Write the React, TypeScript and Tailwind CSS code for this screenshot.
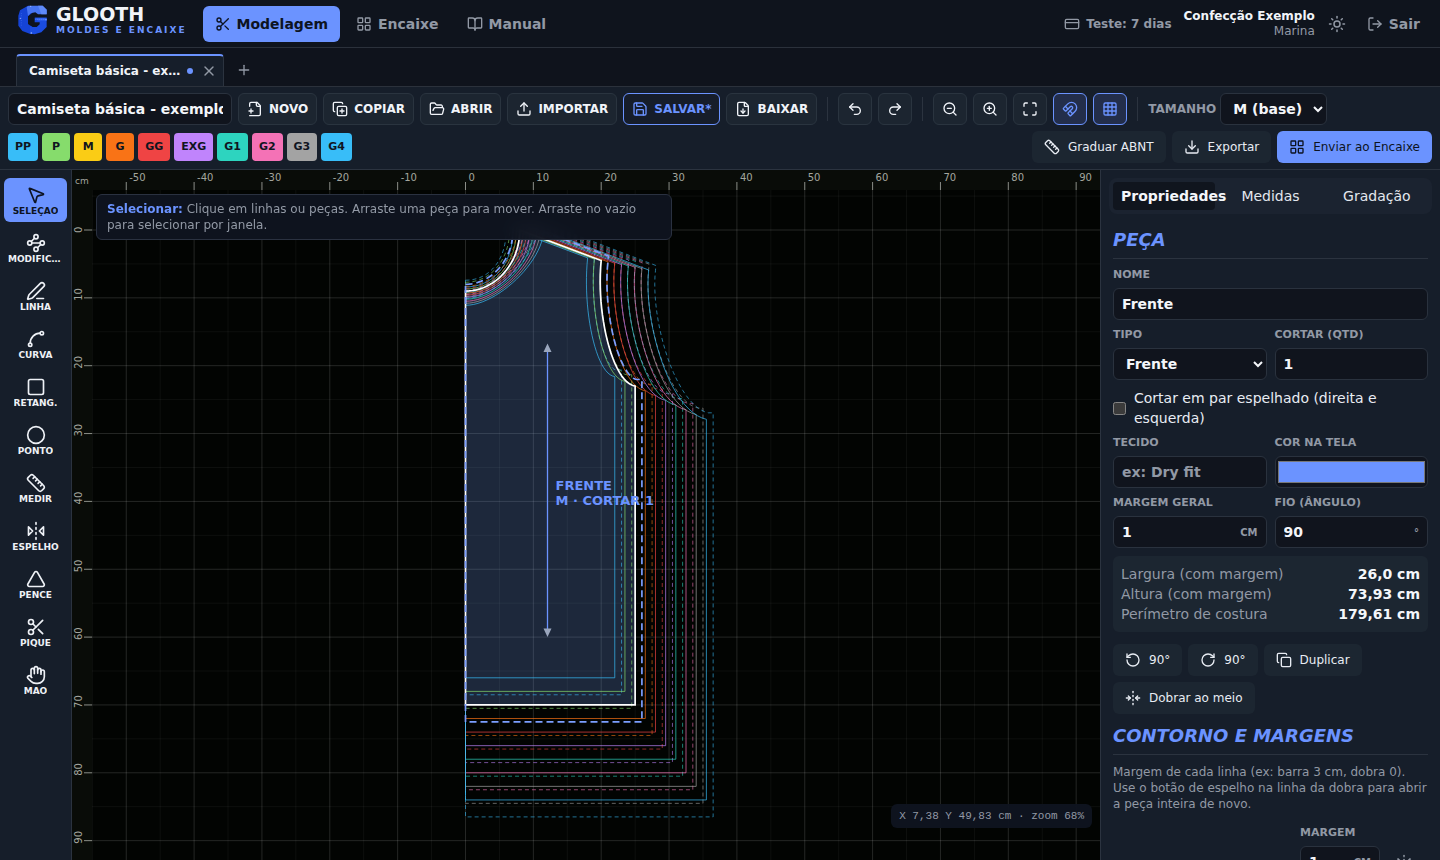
import React, { useState } from "react";
import type { ReactNode } from "react";
import {
  BookOpen,
  Circle,
  Copy,
  CopyPlus,
  CreditCard,
  Download,
  FileDown,
  FlipHorizontal2,
  FoldHorizontal,
  FolderOpen,
  Grid3x3,
  Hand,
  LayoutGrid,
  LogOut,
  Magnet,
  Maximize,
  MousePointer2,
  PenLine,
  Plus,
  Redo2,
  RotateCcw,
  RotateCw,
  Ruler,
  Save,
  Scissors,
  Spline,
  Square,
  Sun,
  Triangle,
  Undo2,
  Upload,
  Waypoints,
  X,
  ZoomIn,
  ZoomOut,
} from "lucide-react";

/* ---------- pattern geometry (centimetres) ---------- */

type Pt = [number, number];

const SCALE = 6.785;
const ORIGIN_X = 393.5;
const ORIGIN_Y = 60;

const toX = (cm: number) => ORIGIN_X + cm * SCALE;
const toY = (cm: number) => ORIGIN_Y + cm * SCALE;

function bezier(a: Pt, b: Pt, c: Pt, d: Pt): Pt[] {
  const out: Pt[] = [];
  for (let i = 0; i <= 24; i++) {
    const t = i / 24;
    const u = 1 - t;
    out.push([
      u * u * u * a[0] + 3 * u * u * t * b[0] + 3 * u * t * t * c[0] + t * t * t * d[0],
      u * u * u * a[1] + 3 * u * u * t * b[1] + 3 * u * t * t * c[1] + t * t * t * d[1],
    ]);
  }
  return out;
}

function offset(points: Pt[], distance: number): Pt[] {
  return points.map((p, i) => {
    const before = points[Math.max(0, i - 1)];
    const after = points[Math.min(points.length - 1, i + 1)];
    const dx = after[0] - before[0];
    const dy = after[1] - before[1];
    const len = Math.hypot(dx, dy);
    return [Math.max(0, p[0] + (dy / len) * distance), p[1] - (dx / len) * distance];
  });
}

function meet(a: Pt, b: Pt, c: Pt, d: Pt): Pt {
  const r: Pt = [b[0] - a[0], b[1] - a[1]];
  const s: Pt = [d[0] - c[0], d[1] - c[1]];
  const k = ((c[0] - a[0]) * s[1] - (c[1] - a[1]) * s[0]) / (r[0] * s[1] - r[1] * s[0]);
  return [a[0] + r[0] * k, a[1] + r[1] * k];
}

const pathOf = (points: Pt[]) =>
  "M" + points.map(([x, y]) => `${toX(x).toFixed(2)} ${toY(y).toFixed(2)}`).join("L") + "Z";

function piece(step: number) {
  const neck: Pt = [8 + 0.5 * step, 0];
  const neckDepth = 9 + 0.3 * step;
  const tip: Pt = [20 + step, 4.5 + 0.2 * step];
  const under: Pt = [25 + 1.5 * step, 23 + 0.7 * step];
  const hem = 70 + 2 * step;
  const bulge = 0.55 - 0.02 * step;
  const neckCurve = bezier(
    [0, neckDepth],
    [neck[0] * bulge, neckDepth],
    [neck[0], neckDepth * bulge],
    neck,
  );
  const armhole = bezier(
    tip,
    [tip[0] - 0.8, tip[1] + 7.5],
    [under[0] - 3.4 - 0.3 * step, under[1] - 0.5 - 0.1 * step],
    under,
  );
  const neckSeam = offset(neckCurve, 1);
  const shoulder = offset([neck, tip], 1);
  const armSeam = offset(armhole, 1);
  const last = armSeam.length - 1;
  const neckEnd = meet(neckSeam[23], neckSeam[24], shoulder[0], shoulder[1]);
  const armStart = meet(shoulder[0], shoulder[1], armSeam[0], armSeam[1]);
  return {
    cut: pathOf([...neckCurve, ...armhole, [under[0], hem], [0, hem]]),
    seam: pathOf([
      ...neckSeam,
      neckEnd,
      armStart,
      ...armSeam,
      [under[0] + 1, armSeam[last][1]],
      [under[0] + 1, hem + 2.5],
      [0, hem + 2.5],
    ]),
  };
}

const sizes = [
  { name: "PP", chip: "bg-[#38bdf8]", line: "#38bdf8", step: -2 },
  { name: "P", chip: "bg-[#86dc6c]", line: "#86dc6c", step: -1 },
  { name: "M", chip: "bg-[#facc15]", line: "#facc15", step: 0 },
  { name: "G", chip: "bg-[#f97316]", line: "#f97316", step: 1 },
  { name: "GG", chip: "bg-[#ef4444]", line: "#ef4444", step: 2 },
  { name: "EXG", chip: "bg-[#c084fc]", line: "#c084fc", step: 3 },
  { name: "G1", chip: "bg-[#2dd4bf]", line: "#2dd4bf", step: 4 },
  { name: "G2", chip: "bg-[#f472b6]", line: "#f472b6", step: 5 },
  { name: "G3", chip: "bg-[#a3a3a3]", line: "#a3a3a3", step: 6 },
  { name: "G4", chip: "bg-[#38bdf8]", line: "#38bdf8", step: 7 },
];

const range = (from: number, to: number, by: number) => {
  const out: number[] = [];
  for (let n = from; n <= to; n += by) out.push(n);
  return out;
};

function PatternCanvas() {
  const base = piece(0);
  return (
    <svg
      className="absolute inset-0 h-full w-full"
      fontFamily="'DejaVu Sans', sans-serif"
      role="img"
      aria-label="Molde da frente"
    >
      <rect width="100%" height="100%" fill="#020402" />
      {range(-55, 300, 5).map((n) => (
        <line
          key={`v${n}`}
          x1={toX(n)}
          x2={toX(n)}
          y1="0"
          y2="100%"
          stroke="#fff"
          strokeOpacity={n % 10 === 0 ? 0.14 : 0.05}
        />
      ))}
      {range(-5, 200, 5).map((n) => (
        <line
          key={`h${n}`}
          y1={toY(n)}
          y2={toY(n)}
          x1="0"
          x2="100%"
          stroke="#fff"
          strokeOpacity={n % 10 === 0 ? 0.14 : 0.05}
        />
      ))}

      <path d={base.cut} fill="#6c93e0" fillOpacity="0.26" />
      {sizes
        .filter((s) => s.step !== 0)
        .map((s) => {
          const p = piece(s.step);
          return (
            <g key={s.name} fill="none" stroke={s.line}>
              <path d={p.seam} strokeOpacity="0.6" strokeDasharray="4 3" />
              <path d={p.cut} strokeOpacity="0.7" />
            </g>
          );
        })}
      <path d={base.cut} fill="none" stroke="#fff" strokeWidth="1.700" />
      <path d={base.seam} fill="none" stroke="#7c9fff" strokeWidth="1.700" strokeDasharray="7 4" />

      <line x1="475.5" x2="475.5" y1="180" y2="460" stroke="#6b93ff" strokeWidth="1.3" />
      <path d="M475.5 173.500l4 8.500h-8zM475.500 467l4-8.500h-8z" fill="#9aa6bd" />
      <g fill="#6b93ff" fontSize="13" fontWeight="700">
        <text x="483.5" y="320">FRENTE</text>
        <text x="483.5" y="335">M · CORTAR 1</text>
      </g>

      <rect width="100%" height="20" fill="#090c08" />
      <rect width="20" height="100%" fill="#090c08" />
      <g fill="#a3a69f" fontSize="10">
        <text x="3" y="14" fontSize="9">cm</text>
        {range(-50, 300, 10).map((n) => (
          <g key={n}>
            <line x1={toX(n)} x2={toX(n)} y1="12" y2="20" stroke="#8b8e88" />
            <text x={toX(n) + 3} y="11">{n}</text>
          </g>
        ))}
        {range(0, 200, 10).map((n) => (
          <g key={n}>
            <line y1={toY(n)} y2={toY(n)} x1="12" x2="20" stroke="#8b8e88" />
            <text transform={`translate(10 ${toY(n) + 3}) rotate(-90)`}>{n}</text>
          </g>
        ))}
      </g>
    </svg>
  );
}

/* ---------- small building blocks ---------- */

function FileNew() {
  return (
    <svg
      className="size-4 shrink-0"
      viewBox="0 0 24 24"
      fill="none"
      stroke="currentColor"
      strokeWidth="2"
      strokeLinecap="round"
      strokeLinejoin="round"
      aria-hidden="true"
    >
      <path d="M4 22h14a2 2 0 0 0 2-2V7l-5-5H6a2 2 0 0 0-2 2v4" />
      <path d="M14 2v4a2 2 0 0 0 2 2h4" />
      <path d="M3 15h6" />
      <path d="M6 12v6" />
    </svg>
  );
}

function Logo() {
  return (
    <svg className="size-[30px]" viewBox="0 0 90 90" aria-hidden="true">
      <path d="M30 2 6 16 1 32v30l12 16 24 9 6-3V66l-13-9V34l12-10V6z" fill="#1543d6" />
      <path d="M32 2h42l12 12v14H60l-8-6-14 3-8 8-4-27z" fill="#4775f2" />
      <path d="M60 2h14l12 12v14H70z" fill="#5f8af9" />
      <path d="M50 38h36v28L70 82l-20 6-14-2V62l8 4h12l9-8v-6H50z" fill="#1a4ce0" />
      <path d="M50 38h36v9H60z" fill="#2c5eee" />
      <g fill="#9db8ff">
        <circle cx="7" cy="40" r="2" />
        <circle cx="38" cy="4" r="2" />
        <circle cx="40" cy="84" r="2.500" />
        <circle cx="84" cy="44" r="2" />
      </g>
      <path d="M52 43h28" stroke="#7fa2ff" strokeWidth="2" strokeDasharray="3 3" fill="none" />
      <path d="M10 24v38" stroke="#3f6df0" strokeWidth="2" strokeDasharray="3 4" fill="none" />
    </svg>
  );
}

const toolButton =
  "flex h-8 items-center gap-1.5 rounded-md border px-2 text-xs font-bold whitespace-nowrap";
const plainTool = "border-[#2a343f] bg-[#1c2530] text-[#f1f4f9]";
const iconTool = "flex h-8 w-[34px] items-center justify-center rounded-md border";
const field =
  "h-8 w-full min-w-0 rounded-md border border-[#2a323e] bg-[#10141d] px-2 text-sm font-bold text-[#f4f6fa] placeholder:text-[#9299a5]";
const softButton =
  "flex h-8 items-center gap-2 rounded-md bg-[#1c2631] px-3 text-xs whitespace-nowrap text-[#e8ecf3]";

function Divider() {
  return <span className="mx-1 h-6 w-px bg-[#2b333f]" />;
}

function Field({ id, label, children }: { id: string; label: string; children: ReactNode }) {
  return (
    <div className="flex min-w-0 flex-col gap-1.5">
      <label htmlFor={id} className="text-[11px] leading-[14px] font-bold text-[#9299a5] uppercase">
        {label}
      </label>
      {children}
    </div>
  );
}

function UnitInput({ id, value, unit }: { id: string; value: string; unit: string }) {
  return (
    <div className="flex h-8 items-center rounded-md border border-[#2a323e] bg-[#10141d] pr-2">
      <input
        id={id}
        defaultValue={value}
        className="h-full w-full min-w-0 bg-transparent px-2 text-sm font-bold text-[#f4f6fa] outline-none"
      />
      <span className="text-[10px] font-bold text-[#9299a5]">{unit}</span>
    </div>
  );
}

function SectionTitle({ children }: { children: ReactNode }) {
  return (
    <h2 className="mb-[9px] border-b border-[#2b333f] pb-1 text-lg leading-7 font-bold text-[#6b93ff] uppercase italic">
      {children}
    </h2>
  );
}

/* ---------- page regions ---------- */

function Header() {
  const nav = "flex h-9 items-center gap-1.5 rounded-md px-3 text-sm font-bold";
  return (
    <header className="flex h-12 shrink-0 items-center border-b border-[#2b313b] bg-[#0f141d] px-2">
      <a href="#" className="flex items-center gap-2 pb-2 pl-2.5">
        <Logo />
        <span className="flex flex-col">
          <span className="text-[19px] leading-5 font-bold text-[#f1f4f9]">GLOOTH</span>
          <span className="text-[9px] leading-3 font-bold tracking-[2px] text-[#6b93ff]">
            MOLDES E ENCAIXE
          </span>
        </span>
      </a>
      <nav className="ml-4 flex gap-1">
        <a href="#modelagem" className={`${nav} bg-[#6b93ff] text-[#0d1322]`}>
          <Scissors size={16} />
          Modelagem
        </a>
        <a href="#encaixe" className={`${nav} text-[#9299a5]`}>
          <LayoutGrid size={16} />
          Encaixe
        </a>
        <a href="#manual" className={`${nav} text-[#9299a5]`}>
          <BookOpen size={16} />
          Manual
        </a>
      </nav>
      <div className="ml-auto flex items-center text-[#9299a5]">
        <a href="#plano" className="flex items-center gap-1.5 text-xs font-bold">
          <CreditCard size={16} />
          Teste: 7 dias
        </a>
        <div className="ml-3 text-right text-xs leading-[15px]">
          <div className="font-bold text-[#f1f4f9]">Confecção Exemplo</div>
          <div>Marina</div>
        </div>
        <button type="button" aria-label="Tema claro" className="ml-1.5 flex size-8 items-center justify-center">
          <Sun size={18} />
        </button>
        <button type="button" className="ml-0.5 flex h-9 items-center gap-1.5 px-3 text-sm font-bold">
          <LogOut size={16} />
          Sair
        </button>
      </div>
    </header>
  );
}

function TabStrip() {
  return (
    <div className="flex h-[39px] shrink-0 items-end border-b border-[#2b313b] bg-[#0f131c] px-4">
      <div className="flex h-8 w-52 items-center rounded-t border-x border-t-2 border-x-[#2b333f] border-t-[#6b93ff] bg-[#161e2a] pr-1.5 pl-3">
        <button type="button" className="min-w-0 flex-1 truncate text-left text-xs font-bold text-[#f1f4f9]">
          Camiseta básica - exemplo
        </button>
        <span className="ml-1 size-1.5 shrink-0 rounded-full bg-[#6b93ff]" />
        <button type="button" aria-label="Fechar aba" className="ml-2 flex size-4 shrink-0 items-center justify-center text-[#9299a5]">
          <X size={16} />
        </button>
      </div>
      <button type="button" aria-label="Nova aba" className="ml-1 flex size-8 items-center justify-center text-[#9299a5]">
        <Plus size={16} />
      </button>
    </div>
  );
}

function Toolbar() {
  return (
    <div className="flex shrink-0 flex-col gap-1.5 border-b border-[#2b333f] bg-[#161e2a] px-2 py-1.5">
      <div className="flex items-center gap-1.5">
        <input
          aria-label="Nome do projeto"
          defaultValue="Camiseta básica - exemplo"
          className="h-8 w-56 rounded-md border border-[#2a323e] bg-[#10141d] px-2 text-sm font-bold text-[#f4f6fa]"
        />
        <button type="button" className={`${toolButton} ${plainTool}`}><FileNew />NOVO</button>
        <button type="button" className={`${toolButton} ${plainTool}`}><CopyPlus size={16} />COPIAR</button>
        <button type="button" className={`${toolButton} ${plainTool}`}><FolderOpen size={16} />ABRIR</button>
        <button type="button" className={`${toolButton} ${plainTool}`}><Upload size={16} />IMPORTAR</button>
        <button type="button" className={`${toolButton} border-[#6b93ff] bg-[#161d2a] text-[#6b93ff]`}>
          <Save size={16} />SALVAR*
        </button>
        <button type="button" className={`${toolButton} ${plainTool}`}><FileDown size={16} />BAIXAR</button>
        <Divider />
        <button type="button" aria-label="Desfazer" className={`${iconTool} ${plainTool}`}><Undo2 size={16} /></button>
        <button type="button" aria-label="Refazer" className={`${iconTool} ${plainTool}`}><Redo2 size={16} /></button>
        <Divider />
        <button type="button" aria-label="Diminuir zoom" className={`${iconTool} ${plainTool}`}><ZoomOut size={16} /></button>
        <button type="button" aria-label="Aumentar zoom" className={`${iconTool} ${plainTool}`}><ZoomIn size={16} /></button>
        <button type="button" aria-label="Enquadrar" className={`${iconTool} ${plainTool}`}><Maximize size={16} /></button>
        <button type="button" aria-label="Ímã" className={`${iconTool} border-[#6b93ff] bg-[#232e4b] text-[#6b93ff]`}>
          <Magnet size={16} />
        </button>
        <button type="button" aria-label="Grade" className={`${iconTool} border-[#6b93ff] bg-[#232e4b] text-[#6b93ff]`}>
          <Grid3x3 size={16} />
        </button>
        <Divider />
        <div className="flex items-center gap-1">
          <label htmlFor="tamanho" className="text-xs font-bold text-[#9299a5]">TAMANHO</label>
          <select
            id="tamanho"
            className="h-8 rounded-md border border-[#2a323e] bg-[#10141d] px-2 text-sm font-bold text-[#f4f6fa]"
          >
            <option>M (base)</option>
          </select>
        </div>
      </div>
      <div className="flex items-center justify-between">
        <div className="flex gap-1">
          {sizes.map((s) => (
            <button
              key={s.name}
              type="button"
              className={`${s.chip} h-7 min-w-7 rounded px-[7px] text-[11px] font-bold text-[#10151f]`}
            >
              {s.name}
            </button>
          ))}
        </div>
        <div className="flex gap-1.5">
          <button type="button" className={softButton}><Ruler size={16} />Graduar ABNT</button>
          <button type="button" className={softButton}><Download size={16} />Exportar</button>
          <button
            type="button"
            className="flex h-8 items-center gap-2 rounded-md bg-[#6b93ff] px-3 text-xs whitespace-nowrap text-[#0d1322]"
          >
            <LayoutGrid size={16} />Enviar ao Encaixe
          </button>
        </div>
      </div>
    </div>
  );
}

const tools = [
  { label: "SELEÇAO", Icon: MousePointer2 },
  { label: "MODIFICAR", Icon: Waypoints },
  { label: "LINHA", Icon: PenLine },
  { label: "CURVA", Icon: Spline },
  { label: "RETANG.", Icon: Square },
  { label: "PONTO", Icon: Circle },
  { label: "MEDIR", Icon: Ruler },
  { label: "ESPELHO", Icon: FlipHorizontal2 },
  { label: "PENCE", Icon: Triangle },
  { label: "PIQUE", Icon: Scissors },
  { label: "MAO", Icon: Hand },
];

function ToolRail() {
  const [active, setActive] = useState("SELEÇAO");
  return (
    <aside className="flex w-[72px] shrink-0 flex-col gap-1 border-r border-[#2b333f] bg-[#161e2a] px-1 py-2">
      {tools.map(({ label, Icon }) => (
        <button
          key={label}
          type="button"
          onClick={() => setActive(label)}
          className={`flex h-11 shrink-0 flex-col items-center justify-center rounded-md px-1 pt-0.5 text-[9px] leading-3 font-bold ${
            active === label ? "bg-[#6b93ff] text-[#0d1322]" : "text-[#eef1f6]"
          }`}
        >
          <Icon size={20} className="shrink-0" />
          <span className="max-w-full truncate">{label}</span>
        </button>
      ))}
    </aside>
  );
}

function Properties() {
  const tab = "h-7 rounded px-2 text-center text-sm whitespace-nowrap";
  const rows = [
    ["Largura (com margem)", "26,0 cm"],
    ["Altura (com margem)", "73,93 cm"],
    ["Perímetro de costura", "179,61 cm"],
  ];
  return (
    <aside className="w-[340px] shrink-0 overflow-y-auto border-l border-[#2b333f] bg-[#161e2a] [scrollbar-width:none]">
      <div className="mx-2 mt-2 grid grid-cols-3 gap-1 rounded-lg bg-[#1b2330] p-1">
        <button type="button" className={`${tab} bg-[#10151e] font-bold text-[#f4f6fa]`}>Propriedades</button>
        <button type="button" className={`${tab} text-[#e3e7ee]`}>Medidas</button>
        <button type="button" className={`${tab} text-[#e3e7ee]`}>Gradação</button>
      </div>
      <div className="px-3 pt-3 pb-4">
        <SectionTitle>Peça</SectionTitle>
        <div className="flex flex-col gap-2">
          <Field id="nome" label="Nome">
            <input id="nome" defaultValue="Frente" className={field} />
          </Field>
          <div className="grid grid-cols-2 gap-2">
            <Field id="tipo" label="Tipo">
              <select id="tipo" className={field}>
                <option>Frente</option>
              </select>
            </Field>
            <Field id="cortar" label="Cortar (qtd)">
              <input id="cortar" defaultValue="1" className={field} />
            </Field>
          </div>
          <label className="flex items-center gap-2 text-sm text-[#e8ecf3]">
            <input type="checkbox" className="size-[13px] shrink-0" />
            Cortar em par espelhado (direita e esquerda)
          </label>
          <div className="grid grid-cols-2 gap-2">
            <Field id="tecido" label="Tecido">
              <input id="tecido" placeholder="ex: Dry fit" className={field} />
            </Field>
            <Field id="cor" label="Cor na tela">
              <input
                id="cor"
                type="color"
                defaultValue="#6b93ff"
                className="h-8 w-full rounded-md border border-[#2a323e] bg-[#10141d]"
              />
            </Field>
          </div>
          <div className="grid grid-cols-2 gap-2">
            <Field id="margem-geral" label="Margem geral">
              <UnitInput id="margem-geral" value="1" unit="CM" />
            </Field>
            <Field id="fio" label="Fio (ângulo)">
              <UnitInput id="fio" value="90" unit="°" />
            </Field>
          </div>
          <dl className="rounded-md bg-[#1c2631] p-2 text-sm">
            {rows.map(([name, value]) => (
              <div key={name} className="flex justify-between">
                <dt className="text-[#9299a5]">{name}</dt>
                <dd className="font-bold text-[#f4f6fa]">{value}</dd>
              </div>
            ))}
          </dl>
        </div>
        <div className="mt-3 mb-2 flex flex-wrap gap-1.5">
          <button type="button" className={softButton}><RotateCcw size={16} />90°</button>
          <button type="button" className={softButton}><RotateCw size={16} />90°</button>
          <button type="button" className={softButton}><Copy size={16} />Duplicar</button>
          <button type="button" className={softButton}><FoldHorizontal size={16} />Dobrar ao meio</button>
        </div>
        <SectionTitle>Contorno e margens</SectionTitle>
        <p className="text-xs text-[#9299a5]">
          Margem de cada linha (ex: barra 3 cm, dobra 0). Use o botão de espelho na linha da dobra para abrir a peça
          inteira de novo.
        </p>
        <div className="mt-3.5 flex items-end justify-end gap-2">
          <div className="w-20">
            <Field id="margem-linha" label="Margem">
              <UnitInput id="margem-linha" value="1" unit="CM" />
            </Field>
          </div>
          <button type="button" aria-label="Espelhar na linha" className="mr-2 flex h-8 w-8 items-center justify-center text-[#9299a5]">
            <FlipHorizontal2 size={16} />
          </button>
        </div>
      </div>
    </aside>
  );
}

export default function App() {
  return (
    <div className="flex h-screen flex-col overflow-hidden bg-[#0f131c] font-['DejaVu_Sans',sans-serif] [color-scheme:dark]">
      <Header />
      <TabStrip />
      <Toolbar />
      <div className="flex min-h-0 flex-1">
        <ToolRail />
        <main className="relative min-w-0 flex-1 overflow-hidden">
          <PatternCanvas />
          <p className="absolute top-6 left-6 max-w-xl rounded-md border border-[#2a3140] bg-[#0f1420]/95 px-2.5 py-1.5 text-xs text-[#9299a5] backdrop-blur-sm">
            <strong className="text-[#6b93ff]">Selecionar:</strong> Clique em linhas ou peças. Arraste uma peça para
            mover. Arraste no vazio para selecionar por janela.
          </p>
          <output className="absolute right-2 bottom-8 rounded-md bg-[#0f1420]/95 px-2 py-1 font-['Liberation_Mono',monospace] text-[11px] leading-4 text-[#9299a5]">
            X 7,38 Y 49,83 cm · zoom 68%
          </output>
        </main>
        <Properties />
      </div>
    </div>
  );
}
